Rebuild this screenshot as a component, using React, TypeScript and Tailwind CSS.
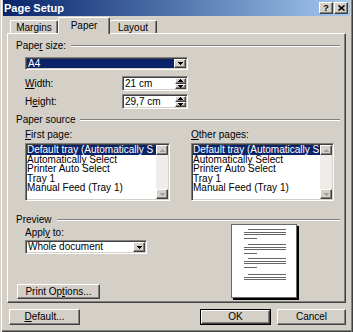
import type { ReactNode } from "react";

const raised =
  "border border-t-white border-l-white border-r-[#404040] border-b-[#404040] bg-[#d4d0c8] shadow-[inset_-1px_-1px_0_#808080]";
const sunken =
  "border border-t-[#808080] border-l-[#808080] border-r-white border-b-white bg-white p-[1px] shadow-[inset_1px_1px_0_#404040,inset_-1px_-1px_0_#d4d0c8]";

/** Small classic triangle, 5x3. */
function Arrow({ up, color = "#000" }: { up?: boolean; color?: string }) {
  const rows = up ? [2, 1, 0] : [0, 1, 2];
  return (
    <svg width="5" height="3" viewBox="0 0 5 3" shapeRendering="crispEdges" aria-hidden>
      {rows.map((inset, y) => (
        <rect key={y} x={inset} y={y} width={5 - inset * 2} height={1} fill={color} />
      ))}
    </svg>
  );
}

function Section({ children, className }: { children: ReactNode; className: string }) {
  return (
    <div className={`flex items-center pl-[8px] pr-[5px] ${className}`}>
      <span className="leading-[12px] whitespace-nowrap">{children}</span>
      <div className="ml-[5px] h-[2px] flex-1 border-t border-b border-t-[#808080] border-b-white" />
    </div>
  );
}

function Combo({ text, selected, className }: { text: string; selected?: boolean; className: string }) {
  return (
    <div className={`flex ${sunken} ${className}`}>
      <div className="flex flex-1 items-center">
        <span
          className={`flex h-full flex-1 items-center pl-[1px] leading-none ${
            selected ? "bg-[#0a246a] text-white" : ""
          }`}
        >
          {text}
        </span>
      </div>
      <div className={`flex w-[12px] items-center justify-center ${raised}`}>
        <Arrow />
      </div>
    </div>
  );
}

function Spin({ value }: { value: string }) {
  return (
    <div className={`flex h-[15px] w-[66px] ${sunken}`}>
      <span className="flex flex-1 items-center pl-[1px] leading-none">{value}</span>
      <div className="flex w-[11px] flex-col">
        <div className={`flex flex-1 items-center justify-center ${raised}`}>
          <Arrow up />
        </div>
        <div className={`flex flex-1 items-center justify-center ${raised}`}>
          <Arrow />
        </div>
      </div>
    </div>
  );
}

// first entry is shown cut by the scrollbar in the dialog
const trays = [
  "Default tray (Automatically S",
  "Automatically Select",
  "Printer Auto Select",
  "Tray 1",
  "Manual Feed (Tray 1)",
];

function ListBox() {
  return (
    <div className={`mt-[2px] flex h-[58px] ${sunken}`}>
      <div className="flex flex-1 flex-col overflow-hidden whitespace-nowrap">
        {trays.map((t, i) => (
          <div
            key={t}
            className={`h-[9.5px] leading-[9.5px] ${i === 0 ? "bg-[#0a246a] text-white" : ""}`}
          >
            {t}
          </div>
        ))}
      </div>
      <div className="flex w-[12px] flex-col bg-[#eeede9]">
        <div className={`flex h-[10px] items-center justify-center ${raised}`}>
          <Arrow up color="#a0a0a0" />
        </div>
        <div className="flex-1" />
        <div className={`flex h-[10px] items-center justify-center ${raised}`}>
          <Arrow color="#a0a0a0" />
        </div>
      </div>
    </div>
  );
}

function PagePreview() {
  const groups = [5, 20, 34, 50];
  return (
    <svg width="68" height="76" viewBox="0 0 68 76" shapeRendering="crispEdges" className="ml-[84px]">
      <rect x="0.5" y="0.5" width="65" height="73" fill="#fff" stroke="#6a6a6a" />
      <rect x="66" y="2" width="2" height="74" fill="#000" />
      <rect x="2" y="74" width="66" height="2" fill="#000" />
      {groups.map((g, gi) => (
        <g key={g} fill="#666">
          <rect x="17" y={g} width="38" height="1" />
          <rect x="13" y={g + 2.5} width="42" height="1" />
          <rect x="13" y={g + 5} width="42" height="1" />
          {gi < 3 ? <rect x="13" y={g + 9} width="13" height="1" /> : null}
        </g>
      ))}
    </svg>
  );
}

function Button({ children, className }: { children: ReactNode; className: string }) {
  return (
    <div className={`flex items-center justify-center leading-none ${raised} ${className}`}>{children}</div>
  );
}

export default function App() {
  return (
    <div className="flex h-[332px] w-[353px] flex-col bg-[#d4d0c8] font-['Liberation_Sans',Arial,sans-serif] text-[10px] text-black shadow-[inset_1px_0_0_#d4d0c8,inset_2px_0_0_#fff,inset_-1px_0_0_#404040,inset_-2px_0_0_#808080,inset_0_-1px_0_#404040,inset_0_-2px_0_#808080]">
      {/* title bar */}
      <div className="mx-[3px] flex h-[16px] items-center justify-between bg-linear-to-r from-[#0a246a] to-[#a6caf0] pr-[2px] pl-[1px]">
        <span className="text-[11px] leading-none font-bold text-white">Page Setup</span>
        <div className="flex gap-[1px]">
          <div className={`flex h-[12px] w-[14px] items-center justify-center text-[9px] leading-none font-bold ${raised}`}>
            ?
          </div>
          <div className={`flex h-[12px] w-[14px] items-center justify-center ${raised}`}>
            <svg width="7" height="6" viewBox="0 0 7 6" aria-hidden>
              <path d="M0.5 0.5L6.5 5.5M6.5 0.5L0.5 5.5" stroke="#000" strokeWidth="1.6" />
            </svg>
          </div>
        </div>
      </div>

      {/* tabs */}
      <div className="ml-[10px] flex h-[17px] items-end">
        <div className="flex h-[13px] w-[48px] items-center justify-center rounded-t-[2px] border-t border-l border-r border-t-white border-l-white border-r-[#404040] shadow-[inset_-1px_0_0_#808080]">
          Margins
        </div>
        <div className="relative z-10 -mb-[1px] flex h-[17px] w-[52px] items-center justify-center rounded-t-[2px] border-t border-l border-r border-t-white border-l-white border-r-[#404040] bg-[#d4d0c8] pb-[2px] shadow-[inset_-1px_0_0_#808080]">
          Paper
        </div>
        <div className="flex h-[13px] w-[47px] items-center justify-center rounded-t-[2px] border-t border-r border-t-white border-r-[#404040] shadow-[inset_-1px_0_0_#808080]">
          Layout
        </div>
      </div>

      {/* tab panel */}
      <div className="ml-[7px] flex h-[270px] w-[339px] flex-col border border-t-white border-l-white border-r-[#404040] border-b-[#404040] shadow-[inset_-1px_-1px_0_#808080]">
        <Section className="mt-[6px] h-[12px]">
          Pape<u>r</u> size:
        </Section>
        <Combo className="mt-[5px] ml-[17px] h-[13px] w-[163px]" text="A4" selected />
        <div className="mt-[6px] ml-[17px] flex h-[15px] items-center">
          <span className="w-[97px]">
            <u>W</u>idth:
          </span>
          <Spin value="21 cm" />
        </div>
        <div className="mt-[3px] ml-[17px] flex h-[15px] items-center">
          <span className="w-[97px]">
            H<u>e</u>ight:
          </span>
          <Spin value="29,7 cm" />
        </div>

        <Section className="mt-[5px] h-[12px]">Paper source</Section>
        <div className="mt-[3px] ml-[17px] flex gap-[21px]">
          <div className="flex w-[145px] flex-col">
            <span className="h-[12px] leading-[12px]">
              <u>F</u>irst page:
            </span>
            <ListBox />
          </div>
          <div className="flex w-[143px] flex-col">
            <span className="h-[12px] leading-[12px]">
              <u>O</u>ther pages:
            </span>
            <ListBox />
          </div>
        </div>

        <Section className="mt-[15px] h-[8px]">Preview</Section>
        <div className="flex">
          <div className="ml-[17px] flex w-[122px] flex-col">
            <span className="mt-[3px] h-[12px] leading-[12px]">
              Appl<u>y</u> to:
            </span>
            <Combo className="mt-[1px] h-[14px] w-[122px]" text="Whole document" />
            <Button className="mt-[30px] -ml-[8px] h-[15px] w-[83px]">
              Print Op<u>t</u>ions...
            </Button>
          </div>
          <PagePreview />
        </div>
      </div>

      {/* dialog buttons */}
      <div className="mt-[6px] flex">
        <Button className="ml-[9px] h-[16px] w-[71px]">
          <u>D</u>efault...
        </Button>
        <div className="ml-[120px] border border-black">
          <Button className="h-[14px] w-[69px]">OK</Button>
        </div>
        <Button className="ml-[6px] h-[16px] w-[69px]">Cancel</Button>
      </div>
    </div>
  );
}
